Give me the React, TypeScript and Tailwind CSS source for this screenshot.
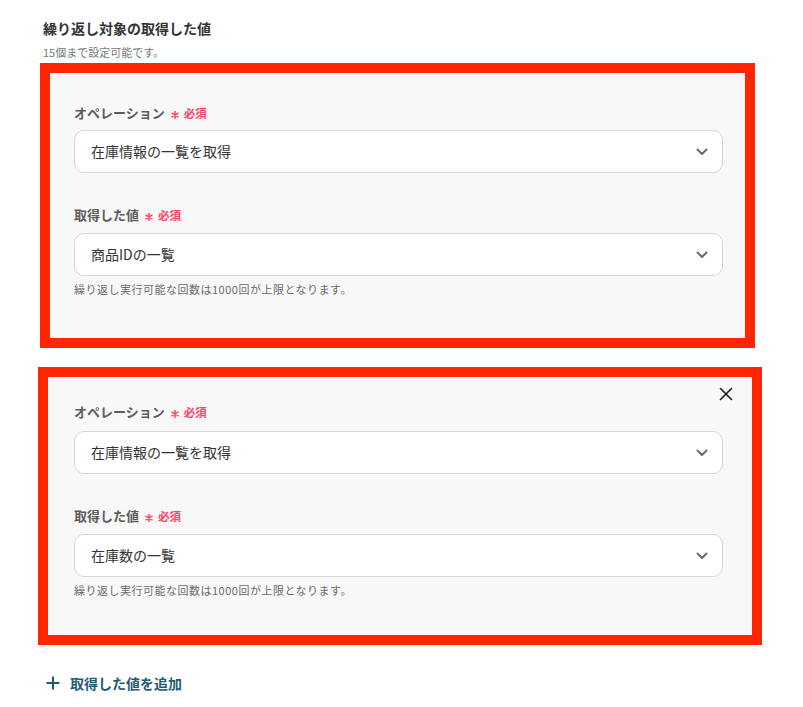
const FONT = '"Noto Sans CJK JP", "Noto Sans", sans-serif'

function Chevron() {
  return (
    <svg width="12" height="8" viewBox="0 0 12 8" fill="none">
      <path d="M1.5 1.5L6 6L10.5 1.5" stroke="#6b6b6b" strokeWidth="2" strokeLinecap="round" strokeLinejoin="round" />
    </svg>
  )
}

function Label({ text }: { text: string }) {
  return (
    <div className="flex items-center h-5">
      <span className="text-[13px] font-bold text-[#5c5c5c] leading-5">{text}</span>
      <svg width="8" height="8" viewBox="0 0 8 8" fill="none" className="ml-[6px] mt-[3px]">
        <path d="M4 0.5V7.5M1 2.2L7 5.8M7 2.2L1 5.8" stroke="#ff4262" strokeWidth="1.5" strokeLinecap="round" />
      </svg>
      <span className="ml-[5px] text-[11.5px] font-bold text-[#ff4262] leading-5">必須</span>
    </div>
  )
}

function Select({ value }: { value: string }) {
  return (
    <div className="h-[43px] flex items-center justify-between bg-white border border-[#d3d6dc] rounded-[10px] pl-4 pr-[14px]">
      <span className="text-[14px] text-[#333333]">{value}</span>
      <Chevron />
    </div>
  )
}

function Helper() {
  return (
    <p className="mt-[5px] text-[11px] leading-4 tracking-[0.5px] text-[#6b6b6b]">
      繰り返し実行可能な回数は1000回が上限となります。
    </p>
  )
}

export default function App() {
  return (
    <div className="w-[803px] h-[707px] bg-white overflow-hidden pt-[18px]" style={{ fontFamily: FONT }}>
      <div className="pl-[43px]">
        <h2 className="text-[14px] font-bold text-[#333333] leading-5">繰り返し対象の取得した値</h2>
        <p className="mt-[6px] text-[11px] text-[#777777] leading-4">15個まで設定可能です。</p>
      </div>

      {/* Block 1 */}
      <div className="mt-[3px] ml-[40px] w-[715px] border-[10px] border-[#ff2600] bg-[#f8f8f8] pl-[24px] pr-[22px] pt-[30px] pb-[41px]">
        <Label text="オペレーション" />
        <div className="mt-[7px]">
          <Select value="在庫情報の一覧を取得" />
        </div>
        <div className="mt-[32px]">
          <Label text="取得した値" />
        </div>
        <div className="mt-[8px]">
          <Select value="商品IDの一覧" />
        </div>
        <Helper />
      </div>

      {/* Block 2 */}
      <div className="mt-[19px] ml-[38px] w-[724px] border-[10px] border-[#ff2600] bg-[#f8f8f8] pl-[26px] pr-[29px] pt-[10px] pb-[37px]">
        <div className="flex justify-end h-[15px] -mr-[10px]">
          <svg width="14" height="14" viewBox="0 0 14 14" fill="none">
            <path d="M1.5 1.5L12.5 12.5M12.5 1.5L1.5 12.5" stroke="#1a1a1a" strokeWidth="1.6" strokeLinecap="round" />
          </svg>
        </div>
        <Label text="オペレーション" />
        <div className="mt-[9px]">
          <Select value="在庫情報の一覧を取得" />
        </div>
        <div className="mt-[32px]">
          <Label text="取得した値" />
        </div>
        <div className="mt-[8px]">
          <Select value="在庫数の一覧" />
        </div>
        <Helper />
      </div>

      {/* Add */}
      <button className="mt-[28px] ml-[46px] flex items-center gap-[10px] text-[#1f5d75]">
        <svg width="14" height="14" viewBox="0 0 14 14" fill="none">
          <path d="M7 0.5V13.5M0.5 7H13.5" stroke="currentColor" strokeWidth="2" />
        </svg>
        <span className="text-[14px] font-bold leading-5">取得した値を追加</span>
      </button>
    </div>
  )
}
